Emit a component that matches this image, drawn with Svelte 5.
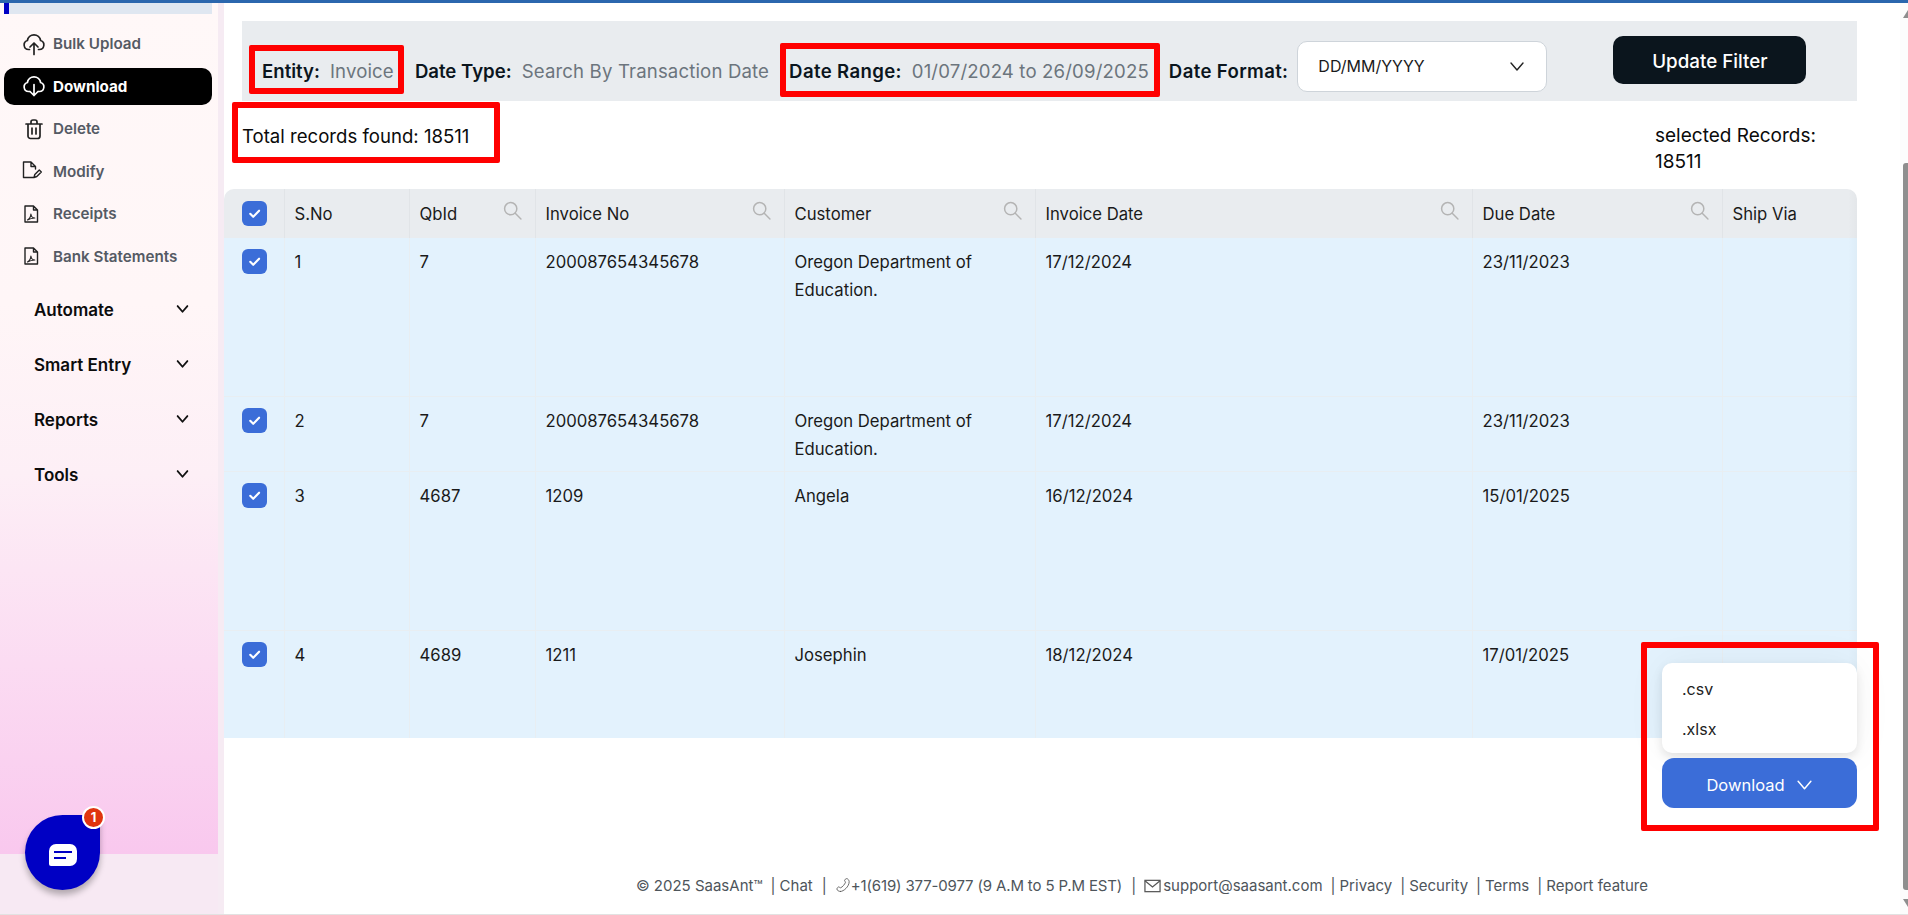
<script>
  const navItems = [
    { label: 'Bulk Upload', icon: 'upload' },
    { label: 'Download', icon: 'download', active: true },
    { label: 'Delete', icon: 'trash' },
    { label: 'Modify', icon: 'modify' },
    { label: 'Receipts', icon: 'pdf' },
    { label: 'Bank Statements', icon: 'pdf' }
  ];
  const groups = ['Automate', 'Smart Entry', 'Reports', 'Tools'];
  const columns = [
    { label: 'S.No', w: 125 },
    { label: 'QbId', w: 126, search: true },
    { label: 'Invoice No', w: 249, search: true },
    { label: 'Customer', w: 251, search: true },
    { label: 'Invoice Date', w: 437, search: true },
    { label: 'Due Date', w: 250, search: true },
    { label: 'Ship Via', w: 135 }
  ];
  const rows = [
    { h: 158, c: ['1', '7', '200087654345678', 'Oregon Department of Education.', '17/12/2024', '23/11/2023', ''] },
    { h: 75, c: ['2', '7', '200087654345678', 'Oregon Department of Education.', '17/12/2024', '23/11/2023', ''] },
    { h: 159, c: ['3', '4687', '1209', 'Angela', '16/12/2024', '15/01/2025', ''] },
    { h: 108, c: ['4', '4689', '1211', 'Josephin', '18/12/2024', '17/01/2025', ''] }
  ];
  const filters = [
    { k: 'Entity:', v: 'Invoice' },
    { k: 'Date Type:', v: 'Search By Transaction Date' },
    { k: 'Date Range:', v: '01/07/2024 to 26/09/2025', wide: true }
  ];
</script>

{#snippet check()}
  <span class="cb">
    <svg viewBox="0 0 24 24" width="17" height="17" fill="none" stroke="#fff" stroke-width="3" stroke-linecap="round" stroke-linejoin="round"><path d="M6 12.5l4.2 4.2L18.5 8" /></svg>
  </span>
{/snippet}

{#snippet chevron(size, color, sw)}
  <svg viewBox="0 0 16 16" width={size} height={size} fill="none" stroke={color} stroke-width={sw} stroke-linecap="round" stroke-linejoin="round"><path d="M2 5l6 7 6-7" /></svg>
{/snippet}

{#snippet navIcon(name)}
  <svg class="ni" viewBox="0 0 24 24" width="24" height="24" fill="none" stroke="currentColor" stroke-width="1.7" stroke-linecap="round" stroke-linejoin="round">
    {#if name === 'upload'}
      <path d="M7.5 17.5H6.6A4.6 4.6 0 0 1 5.4 8.5 6.7 6.7 0 0 1 18.6 8.5 4.6 4.6 0 0 1 17.4 17.5H16.5" /><path d="M12 22.5V11M8 15l4-4 4 4" />
    {:else if name === 'download'}
      <path d="M7.5 17.5H6.6A4.6 4.6 0 0 1 5.4 8.5 6.7 6.7 0 0 1 18.6 8.5 4.6 4.6 0 0 1 17.4 17.5H16.5" /><path d="M12 10.5V21.5M8 17.5l4 4 4-4" />
    {:else if name === 'trash'}
      <path d="M4 7h16M9 7V5a2 2 0 0 1 2-2h2a2 2 0 0 1 2 2v2M6 7v12a2.5 2.5 0 0 0 2.5 2.5h7A2.5 2.5 0 0 0 18 19V7M10 11v6M14 11v6" />
    {:else if name === 'modify'}
      <path d="M11.5 18.500H1.500V3H9l4.500 4.500V10M9 3v4.500h4.500" stroke-width="1.400" /><path d="M12 18.500l.8-3 4.500-4.500 2 2-4.500 4.500z" stroke-width="1.400" />
    {:else}
      <g transform="translate(-3 0)"><path d="M6 4h8.500l4 4v12H6zM14.500 4v4h4" stroke-width="1.400" /><path d="M8.500 18c2.500-1.500 3.300-4 3.400-6 .3 2.500 1.600 4 3.900 4-2.800.2-5 .8-7.300 2z" stroke-width="1.100" /></g>
    {/if}
  </svg>
{/snippet}

<div class="app">
  <div class="topbar"></div>
  <div class="shell">
    <aside class="sidebar">
      <div class="stub"><span></span></div>
      <nav class="nav">
        {#each navItems as item}
          <div class="nav-item" class:active={item.active}>
            {@render navIcon(item.icon)}
            <span>{item.label}</span>
          </div>
        {/each}
      </nav>
      <div class="groups">
        {#each groups as g}
          <div class="group">
            <span>{g}</span>
            {@render chevron(13, '#111', 2.2)}
          </div>
        {/each}
      </div>
    </aside>

    <main class="main">
      <section class="filter">
        {#each filters as f}
          <div class="pair" class:wide={f.wide}><b>{f.k}</b><span>{f.v}</span></div>
        {/each}
        <b class="fmt-label">Date Format:</b>
        <div class="select">
          <span>DD/MM/YYYY</span>
          {@render chevron(16, '#222', 1.4)}
        </div>
        <button class="update">Update Filter</button>
      </section>

      <section class="info">
        <div class="total">Total records found: 18511</div>
        <div class="selected">selected Records: 18511</div>
      </section>

      <div class="table-wrap">
        <table>
          <colgroup>
            <col style="width:60px" />
            {#each columns as c}<col style="width:{c.w}px" />{/each}
          </colgroup>
          <thead>
            <tr>
              <th class="cbc">{@render check()}</th>
              {#each columns as c}
                <th>
                  <div class="th">
                    <span>{c.label}</span>
                    {#if c.search}
                      <svg viewBox="0 0 18 18" width="19" height="19" fill="none" stroke="#b4b4b4" stroke-width="1.4" stroke-linecap="round"><circle cx="7.3" cy="7.3" r="5.8" /><path d="M11.6 11.6L17 17" /></svg>
                    {/if}
                  </div>
                </th>
              {/each}
            </tr>
          </thead>
          <tbody>
            {#each rows as r}
              <tr style="height:{r.h}px">
                <td class="cbc">{@render check()}</td>
                {#each r.c as cell}<td>{cell}</td>{/each}
              </tr>
            {/each}
          </tbody>
        </table>
      </div>

      <footer class="footer">
        <span>© 2025 SaasAnt™</span><i>|</i><span>Chat</span><i class="w">|</i>
        <svg viewBox="0 0 24 24" width="16" height="16" fill="none" stroke="#555" stroke-width="1.4" stroke-linecap="round" stroke-linejoin="round"><path d="M8 22c-3 0-6-2-6-4 0-1.500 2-3.500 3-3.500s2 1.500 3 1.500c3-1 7-6 8-9 0-1-1.500-2-1.500-3s2-3 3.500-3c2 0 4 3 4 5 0 8-9 16-14 16z" transform="translate(1 0) scale(.92)" /></svg>
        <span class="phone">+1(619) 377-0977 (9 A.M to 5 P.M EST)</span><i class="w">|</i>
        <svg viewBox="0 0 18 14" width="17" height="14" fill="none" stroke="#555" stroke-width="1.3"><rect x="1" y="1" width="16" height="12" /><path d="M1 1.500l8 6.500 8-6.500" /></svg>
        <span class="mail">support@saasant.com</span><i>|</i><span>Privacy</span><i>|</i><span>Security</span><i>|</i><span>Terms</span><i>|</i><span>Report feature</span>
      </footer>
    </main>

    <div class="scrollbar">
      <span class="arrow up"></span>
      <span class="thumb"></span>
      <span class="arrow down"></span>
    </div>
  </div>

  <div class="dl">
    <div class="menu">
      <div>.csv</div>
      <div>.xlsx</div>
    </div>
    <button class="dl-btn">Download {@render chevron(17, '#fff', 1.4)}</button>
  </div>

  <div class="chat">
    <svg viewBox="0 0 28 22" width="28" height="22"><path d="M7 0h14a7 7 0 0 1 7 7v8a7 7 0 0 1-7 7H2a2 2 0 0 1-2-2V7a7 7 0 0 1 7-7z" fill="#fff" /><path d="M5 8h18M5 14h12" stroke="#0000c4" stroke-width="2.200" /></svg>
    <span class="badge">1</span>
  </div>

  <div class="mark m-entity"></div>
  <div class="mark m-range"></div>
  <div class="mark m-total"></div>
  <div class="mark m-dl"></div>
</div>

<style>
  :global(body) { margin: 0; overflow: hidden; background: #fff; }
  .app {
    position: relative;
    width: 1908px;
    height: 915px;
    display: flex;
    flex-direction: column;
    overflow: hidden;
    font-family: Inter, "Liberation Sans", sans-serif;
    color: #1a1a1a;
    border-bottom: 1px solid #e2e2e2;
    box-sizing: border-box;
  }
  .topbar { height: 3px; background: #2b67ae; flex: none; }
  .shell { flex: 1; display: flex; min-height: 0; }

  .sidebar {
    flex: none;
    border-right: 6px solid #f6ebf3;
    background: linear-gradient(#fff8f8 0, #fff6f7 300px, #fdeff6 470px, #f9c8ee 851px, #f7e9f3 851px);
    padding: 0 6px 0 4px;
    box-sizing: content-box;
    width: 208px;
  }
  .stub { height: 11px; background: #dfe7f1; }
  .stub span { display: block; width: 5px; height: 11px; background: #0000c4; }
  .nav { margin-top: 11px; display: flex; flex-direction: column; gap: 5.6px; }
  .nav-item {
    height: 37px;
    display: flex;
    align-items: center;
    gap: 7px;
    padding-left: 18px;
    border-radius: 10px;
    font-size: 15.2px;
    font-weight: 600;
    color: #555a64;
  }
  .nav-item .ni { color: #222; flex: none; }
  .nav-item.active { background: #000; color: #fff; font-weight: 700; }
  .nav-item.active .ni { color: #fff; }
  .groups { margin-top: 8px; padding: 0 23px 0 30px; }
  .group {
    height: 55px;
    display: flex;
    align-items: center;
    justify-content: space-between;
    font-size: 17px;
    font-weight: 600;
    color: #0c0c0c;
  }
  .group svg { margin-top: -3px; }

  .main { flex: 1; min-width: 0; display: flex; flex-direction: column; padding-top: 18px; }
  .filter {
    height: 80px;
    margin: 0 43px 0 18px;
    background: #e9ecef;
    display: flex;
    align-items: flex-start;
    padding-left: 20px;
    font-size: 18.6px;
    line-height: 24px;
    white-space: nowrap;
  }
  .pair { margin-top: 38px; margin-right: 20px; display: flex; gap: 10px; }
  .pair:first-child { margin-right: 21px; }
  .pair b, .fmt-label { font-weight: 600; color: #0b151d; }
  .pair span { color: #6c757d; letter-spacing: .15px; }
  .pair.wide b, .fmt-label { letter-spacing: .35px; }
  .fmt-label { margin-top: 38px; margin-right: 9px; }
  .select {
    margin-top: 20px;
    width: 250px;
    height: 51px;
    box-sizing: border-box;
    background: #fff;
    border: 1px solid #ced4da;
    border-radius: 10px;
    display: flex;
    align-items: center;
    justify-content: space-between;
    padding: 0 21px 2px 20px;
    font-size: 16px;
    color: #1a1a1a;
  }
  .update {
    margin: 15px 0 0 66px;
    width: 193px;
    height: 48px;
    border: 0;
    border-radius: 10px;
    background: #0b151d;
    color: #fff;
    font: 500 18.8px Inter, sans-serif;
    padding: 2px 0 0;
  }

  .info {
    height: 88px;
    display: flex;
    justify-content: space-between;
    padding-left: 18px;
    font-size: 18.6px;
    line-height: 26px;
    color: #0b0b0b;
  }
  .total { margin-top: 22px; }
  .selected { width: 170px; margin: 22px 75px 0 0; font-size: 19px; }

  .table-wrap {
    margin-right: 43px;
    position: relative;
    border-radius: 10px 10px 0 0;
    overflow: hidden;
  }
  .table-wrap::after {
    content: '';
    position: absolute;
    top: 0; right: 0; bottom: 0;
    width: 9px;
    background: linear-gradient(90deg, rgba(0,0,0,0), rgba(0,0,0,.025));
  }
  table { width: 1633px; table-layout: fixed; border-collapse: collapse; font-size: 16.7px; line-height: 28px; }
  thead tr { height: 49px; background: #e9ecef; }
  tbody tr { background: #e3f2fd; }
  th { font-weight: 400; text-align: left; padding: 0 13px 0 10px; border-right: 1px solid #e1e4e7; color: #1a1a1a; }
  th:last-child, td:last-child { border-right: 0; }
  td { vertical-align: top; padding: 10px 30px 0 10px; border-right: 1px solid #e8eef2; border-bottom: 1px solid #e8eef2; color: #1a1a1a; }
  tr:last-child td { border-bottom: 0; }
  .th { display: flex; justify-content: space-between; align-items: flex-start; }
  .th span { line-height: 24px; padding-top: 1px; }
  th.cbc, td.cbc { padding: 0 0 0 18px; }
  td.cbc { padding-top: 11px; }
  .cb {
    width: 25px; height: 25px;
    border-radius: 6px;
    background: #3b6dd8;
    display: flex;
    align-items: center;
    justify-content: center;
  }

  .footer {
    margin-top: auto;
    padding: 0 252px 18px 0;
    display: flex;
    justify-content: flex-end;
    align-items: center;
    font-size: 15px;
    line-height: 20px;
    color: #4e555b;
    white-space: nowrap;
  }
  .footer i { font-style: normal; margin: 0 4px 0 8px; }
  .footer i.w { margin: 0 8px 0 9px; }
  .footer .mail { margin-left: 2px; }
  .footer .phone { letter-spacing: -.15px; }

  .scrollbar {
    width: 8px;
    flex: none;
    background: #fcfcfc;
    display: flex;
    flex-direction: column;
    align-items: flex-end;
    padding: 7px 0 7px;
  }
  .thumb { flex: 1; width: 5px; margin: 145px 0 9px; background: #8e8e8e; border-radius: 3px 0 0 3px; }
  .arrow { width: 0; height: 0; border-left: 5px solid transparent; }
  .arrow.up { border-bottom: 8px solid #8e8e8e; }
  .arrow.down { border-top: 8px solid #8e8e8e; }

  .dl {
    position: absolute;
    left: 1662px;
    top: 663px;
    width: 195px;
    display: flex;
    flex-direction: column;
    gap: 5px;
  }
  .menu {
    height: 90px;
    background: #fff;
    border-radius: 10px;
    box-shadow: 0 4px 10px rgba(0,0,0,.1), 0 0 40px rgba(0,0,0,.05);
    padding: 6px 0 0 20px;
    font-size: 16px;
    line-height: 40px;
    box-sizing: border-box;
    color: #222;
  }
  .dl-btn {
    height: 50px;
    border: 0;
    border-radius: 12px;
    background: #3b6dd8;
    color: #fff;
    font: 400 16.5px Inter, sans-serif;
    display: flex;
    align-items: center;
    justify-content: center;
    gap: 11px;
    padding: 3px 0 0;
  }

  .chat {
    position: absolute;
    left: 25px;
    top: 815px;
    width: 75px;
    height: 75px;
    background: #0000c4;
    border-radius: 50% 0 50% 50%;
    box-shadow: 0 5px 6px rgba(0,0,0,.28);
    display: flex;
    align-items: center;
    justify-content: center;
  }
  .chat svg { margin-top: 4px; }
  .badge {
    position: absolute;
    right: -5px;
    top: -9px;
    width: 19px;
    height: 19px;
    border: 2px solid #fff;
    border-radius: 50%;
    background: #e0340f;
    color: #fff;
    font-size: 13px;
    font-weight: 700;
    line-height: 18px;
    text-align: center;
  }

  .mark {
    position: absolute;
    border: 6px solid #f00;
    border-radius: 2px;
    box-sizing: border-box;
    pointer-events: none;
  }
  .m-entity { left: 249px; top: 45px; width: 155px; height: 49px; }
  .m-range { left: 780px; top: 43px; width: 380px; height: 54px; }
  .m-total { left: 232px; top: 102px; width: 268px; height: 61px; }
  .m-dl { left: 1641px; top: 642px; width: 238px; height: 189px; }
</style>
